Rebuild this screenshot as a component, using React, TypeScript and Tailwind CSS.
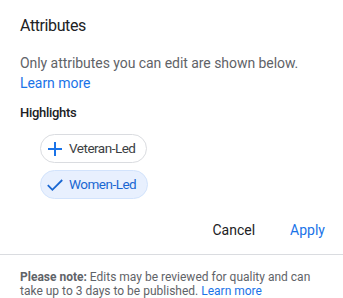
import React from "react";

function PlusIcon() {
  return (
    <svg width="16" height="16" viewBox="0 0 16 16" className="shrink-0">
      <path d="M8 1v14M1 8h14" stroke="#1a73e8" strokeWidth="2" fill="none" />
    </svg>
  );
}

function CheckIcon() {
  return (
    <svg width="16" height="16" viewBox="0 0 16 16" className="shrink-0">
      <path d="M0.8 8.2l4.6 4.6L15.2 3" stroke="#1967d2" strokeWidth="1.8" fill="none" />
    </svg>
  );
}

export default function App() {
  return (
    <div
      className="w-[343px] h-[298px] bg-white overflow-hidden flex flex-col"
      style={{ fontFamily: "Roboto, 'Liberation Sans', sans-serif" }}
    >
      <div className="px-5 pt-[14px]">
        <h1 className="text-[16px] leading-[24px] tracking-[-0.4px] text-[#202124] font-normal">Attributes</h1>
        <p className="mt-[15px] text-[14px] leading-[20px] tracking-[-0.05px] text-[#5f6368]">
          Only attributes you can edit are shown below.
          <br />
          <span className="text-[#1a73e8]">Learn more</span>
        </p>
        <div className="mt-[10px] text-[13px] leading-[20px] font-medium tracking-[-0.3px] text-[#202124]">Highlights</div>
        <div className="mt-[11px] ml-5 flex flex-col items-start gap-[7px]">
          <div className="h-[29px] flex items-center gap-[6px] pl-[6px] pr-[11px] rounded-full border border-[#dadce0] bg-white">
            <PlusIcon />
            <span className="text-[13.5px] tracking-[-0.5px] text-[#3c4043]">Veteran-Led</span>
          </div>
          <div className="h-[29px] flex items-center gap-[6px] pl-[6px] pr-[11px] rounded-full border border-[#d2e3fc] bg-[#e8f0fe]">
            <CheckIcon />
            <span className="text-[13.5px] tracking-[-0.5px] text-[#1967d2]">Women-Led</span>
          </div>
        </div>
        <div className="mt-[21px] -mr-[2px] flex justify-end items-center gap-[35px]">
          <span className="text-[14px] leading-[20px] text-[#202124]">Cancel</span>
          <span className="text-[14px] leading-[20px] text-[#1a73e8]">Apply</span>
        </div>
      </div>
      <div className="mt-[14px] border-t border-[#dadce0] px-5 pt-[15px]">
        <p className="text-[12px] leading-[14px] text-[#5f6368]">
          <span className="font-bold">Please note:</span> Edits may be reviewed for quality and can take up to 3 days to be published.{" "}
          <span className="text-[#1a73e8]">Learn more</span>
        </p>
      </div>
    </div>
  );
}
